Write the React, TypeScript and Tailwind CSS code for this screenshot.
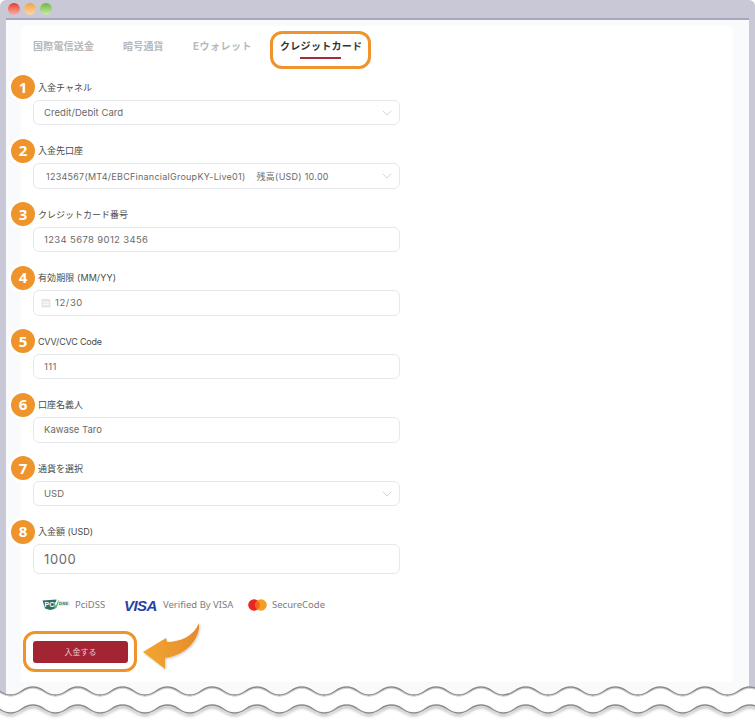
import React from "react";

const sans = "font-['Inter','Noto_Sans_CJK_JP',sans-serif]";

function wave(y0: number, amp: number) {
  const period = 44.8;
  let x = -11.8;
  let d = `M${x} ${y0 - amp}`;
  let up = true;
  while (x < 770) {
    const nx = x + period / 2;
    const ny = up ? y0 + amp : y0 - amp;
    const py = up ? y0 - amp : y0 + amp;
    d += ` C${(x + period / 4).toFixed(1)} ${py} ${(x + period / 4).toFixed(1)} ${ny} ${nx.toFixed(1)} ${ny}`;
    x = nx;
    up = !up;
  }
  return d;
}

function Chevron() {
  return (
    <svg width="10" height="6" viewBox="0 0 10 6" fill="none" className="shrink-0">
      <path d="M0.8 0.8 L5 5 L9.2 0.8" stroke="#d2d4d9" strokeWidth="1" />
    </svg>
  );
}

function Field({
  n,
  label,
  value,
  select,
  calendar,
  big,
  valueClass,
  labelClass,
}: {
  n: number;
  label: string;
  value: string;
  select?: boolean;
  calendar?: boolean;
  big?: boolean;
  valueClass?: string;
  labelClass?: string;
}) {
  return (
    <div className="relative mb-[13px]">
      <div className="absolute left-[-22px] top-[0.5px] flex h-[24px] w-[24px] items-center justify-center rounded-full bg-[#ef942c] text-[15px] font-bold text-white shadow-[0_0_0_2.5px_#ffffff] font-['Open_Sans',sans-serif]">
        {n}
      </div>
      <div className={`flex h-[25px] items-center pl-[5px] pt-[1px] text-[9px] text-[#4a4a4a] ${labelClass ?? ""}`}>{label}</div>
      <div
        className={`flex items-center rounded-[6px] border border-[#e6e8ec] bg-white pr-[7px] pt-[1px] text-[#6a6a6a] ${
          big ? "h-[30px] pl-[10px] text-[13px]" : `h-[25.5px] text-[9.5px] ${calendar ? "pl-[7px]" : "pl-[10px]"}`
        } ${valueClass ?? ""}`}
      >
        {calendar && (
          <svg width="10" height="10" viewBox="0 0 10 10" className="mr-[4px] shrink-0">
            <rect x="0.5" y="1" width="9" height="8.5" rx="1" fill="#e3e5e8" />
            <rect x="2" y="3.6" width="6" height="1" fill="#ffffff" />
            <rect x="2" y="5.8" width="6" height="1" fill="#ffffff" />
          </svg>
        )}
        <span className="flex-1 whitespace-pre">{value}</span>
        {select && <Chevron />}
      </div>
    </div>
  );
}

export default function App() {
  return (
    <div className={`relative h-[721px] w-[755px] overflow-hidden bg-white ${sans}`}>
      {/* window chrome */}
      <div className="flex h-full flex-col rounded-t-[6px] bg-[#c8c8d6] px-[6px]">
        <div className="flex h-[18px] shrink-0 items-center gap-[4px] pl-[2px]">
          <span className="h-[12px] w-[12px] rounded-full bg-linear-to-b from-[#e4322b] to-[#f7b0a6]" />
          <span className="h-[12px] w-[12px] rounded-full bg-linear-to-b from-[#f2a33a] to-[#f9d8a8]" />
          <span className="h-[12px] w-[12px] rounded-full bg-linear-to-b from-[#6cb82c] to-[#cfe8b0]" />
        </div>
        <div className="flex-1 border-t-2 border-[#a9a7c0] bg-[#f9fafc] px-[15px] pt-[6px]">
          <div className="h-[656px] w-[712px] rounded-t-[6px] bg-white pl-[12px]">
            {/* tabs */}
            <div className="flex h-[48.5px] items-start pt-[12.5px] text-[10px] font-bold text-[#b8b8b8]">
              <span className="w-[90px] tracking-[0.2px]">国際電信送金</span>
              <span className="w-[70px] tracking-[0.2px]">暗号通貨</span>
              <span className="w-[87px] tracking-[0.5px]">Eウォレット</span>
              <span className="relative tracking-[0.3px] text-[#333333]">
                クレジットカード
                <span className="absolute left-[20px] top-[18px] h-[2px] w-[41px] bg-[#a52a3a]" />
              </span>
            </div>
            {/* form */}
            <div className="w-[367px]">
              <Field n={1} label="入金チャネル" value="Credit/Debit Card" select valueClass="tracking-[0.05px]" />
              <Field n={2} label="入金先口座" value="1234567(MT4/EBCFinancialGroupKY-Live01)    残高(USD) 10.00" select valueClass="text-[9px] tracking-[0.25px] pl-[12px]" />
              <Field n={3} label="クレジットカード番号" value="1234 5678 9012 3456" valueClass="tracking-[0.35px]" />
              <Field n={4} label="有効期限 (MM/YY)" labelClass="tracking-[0.1px]" value="12/30" calendar valueClass="tracking-[0.6px]" />
              <Field n={5} label="CVV/CVC Code" labelClass="tracking-[-0.2px]" value="111" valueClass="tracking-[0.35px]" />
              <Field n={6} label="口座名義人" value="Kawase Taro" />
              <Field n={7} label="通貨を選択" value="USD" select />
              <Field n={8} label="入金額 (USD)" value="1000" big valueClass="tracking-[0.6px]" />
            </div>
            {/* payment logos */}
            <div className="mt-[21px] flex h-[20px] items-center pl-[9px] font-['Noto_Sans',sans-serif] text-[9.5px] text-[#7c7c7c]">
              <svg width="28" height="12" viewBox="0 0 28 12" className="mr-[5px] shrink-0">
                <path d="M0.5 1.5 L14.5 0.5 L12.5 10 L8 11 L3 9.5 Z" fill="#2f6f66" />
                <text x="2.5" y="7.5" fontSize="7" fontWeight="700" fill="#ffffff" fontFamily="Liberation Sans">PCI</text>
                <path d="M12 5 L13.8 8.6 L17 1.5" stroke="#4fb05a" strokeWidth="1.2" fill="none" />
                <rect x="16.5" y="2" width="11" height="5" fill="#e3ece9" />
                <text x="17" y="6.2" fontSize="4.4" fontWeight="700" fill="#2f6f66" fontFamily="Liberation Sans">DSS</text>
              </svg>
              <span className="w-[49px]">PciDSS</span>
              <span className="mr-[6px] w-[33px] font-['Liberation_Sans',sans-serif] text-[15px] font-bold italic leading-none tracking-[-0.6px] text-[#2540a8]">VISA</span>
              <span className="w-[85px]">Verified By VISA</span>
              <svg width="19" height="12" viewBox="0 0 19 12" className="mr-[5px] shrink-0">
                <circle cx="6" cy="6" r="5.8" fill="#e8261f" />
                <circle cx="13" cy="6" r="5.8" fill="#f59d22" />
                <path d="M9.5 1.4 A5.8 5.8 0 0 1 9.5 10.6 A5.8 5.8 0 0 1 9.5 1.4 Z" fill="#f2651f" />
              </svg>
              <span>SecureCode</span>
            </div>
            {/* submit */}
            <div className="mt-[26px] flex h-[22px] w-[95px] items-center justify-center rounded-[3px] bg-[#a32433] text-[8px] text-[#eec9ce]">
              入金する
            </div>
          </div>
        </div>
      </div>

      {/* callout outlines */}
      <div className="absolute left-[270px] top-[31px] h-[38px] w-[101px] rounded-[12px] border-[3px] border-[#ef942c]" />
      <div className="absolute left-[23px] top-[631px] h-[41px] w-[114px] rounded-[12px] border-[3.5px] border-[#ef942c]" />

      {/* arrow + torn edge drawings */}
      <svg className="absolute left-0 top-0" width="755" height="721" viewBox="0 0 755 721" fill="none">
        <defs>
          <linearGradient id="arrowFill" x1="143" y1="650" x2="200" y2="630" gradientUnits="userSpaceOnUse">
            <stop offset="0" stopColor="#f2a530" />
            <stop offset="1" stopColor="#e48a2c" />
          </linearGradient>
          <filter id="soft" x="-5%" y="-200%" width="110%" height="500%">
            <feDropShadow dx="0" dy="2" stdDeviation="1.5" floodColor="#000000" floodOpacity="0.45" />
          </filter>
          <filter id="softTop" x="-5%" y="-200%" width="110%" height="500%">
            <feDropShadow dx="0" dy="1" stdDeviation="0.7" floodColor="#000000" floodOpacity="0.2" />
          </filter>
          <filter id="softArrow" x="-20%" y="-20%" width="140%" height="140%">
            <feDropShadow dx="1" dy="1" stdDeviation="1" floodColor="#000000" floodOpacity="0.2" />
          </filter>
        </defs>
        <path
          d="M143 652 L166 638 L167 642 C180 642 194 636 199 623 C201 638 186 656 165 658 L165 669 Z"
          fill="url(#arrowFill)"
          filter="url(#softArrow)"
        />
        <path d={`${wave(691, 4)} L770 730 L-12 730 Z`} fill="#ffffff" />
        <path d={wave(691, 4)} stroke="#8c8c8c" strokeWidth="1.4" filter="url(#softTop)" />
        <path d={wave(709, 4)} stroke="#8c8c8c" strokeWidth="1.5" filter="url(#soft)" />
      </svg>
    </div>
  );
}
